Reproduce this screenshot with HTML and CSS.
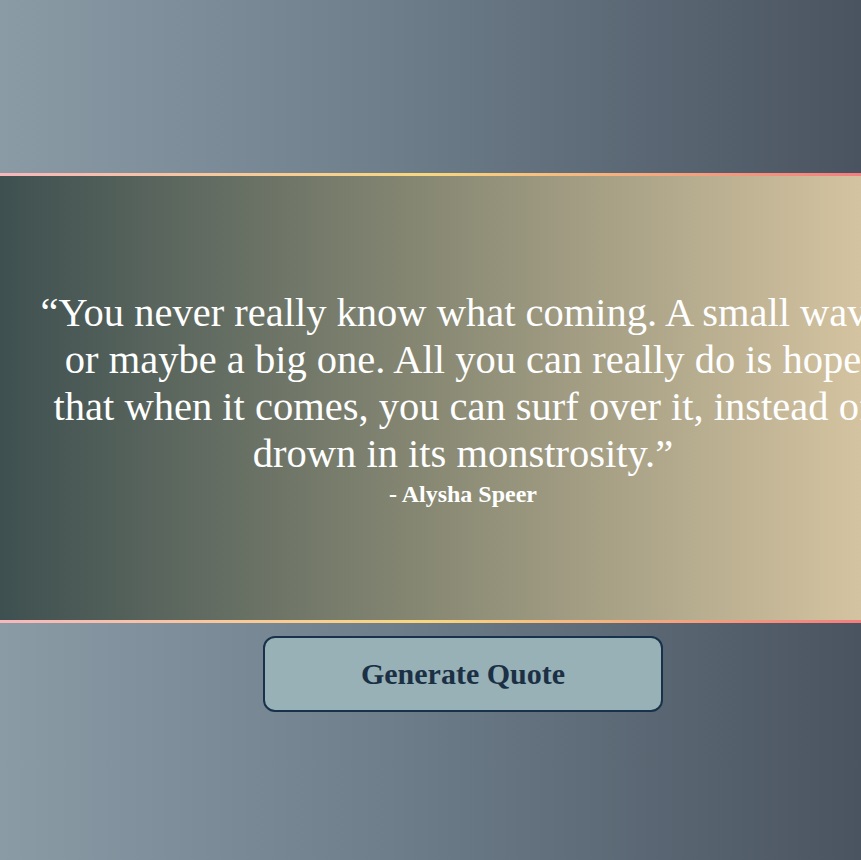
FILE: index.html
```html
<!DOCTYPE html>
<html lang="en">
<head>
<meta charset="utf-8">
<title>Quote Generator</title>
<link rel="stylesheet" href="styles.css">
</head>
<body>
<main class="page">
  <section class="quote-band">
    <div class="quote-box">
      <p class="quote-text">“You never really know what coming. A small wave or maybe a big one. All you can really do is hope that when it comes, you can surf over it, instead of drown in its monstrosity.”</p>
      <p class="quote-author">- Alysha Speer</p>
    </div>
  </section>
  <div class="actions">
    <button class="generate-btn" type="button">Generate Quote</button>
  </div>
</main>
</body>
</html>
```
FILE: styles.css
```css
html {
  overflow: hidden;
  background: linear-gradient(to right, #8b9ba6 0%, #6e7e8b 45%, #4a5460 100%);
  min-height: 100%;
}
body {
  margin: 0;
  min-height: 860px;
  font-family: "Liberation Serif", "Times New Roman", serif;
}
.page {
  width: 926px;
  padding-top: 173px;
}
.quote-band {
  height: 444px;
  border-top: 3px solid #f8b6bb;
  border-bottom: 3px solid #f8b6bb;
  border-image: linear-gradient(to right, #f8b7bc 0%, #f9d77d 46%, #f47d7d 93%, #f47d7d 100%) 1;
  background: linear-gradient(to right, #3e5050 0%, #878873 46%, #d4c3a0 93%, #d4c3a0 100%);
  display: flex;
  align-items: center;
  justify-content: center;
}
.quote-box {
  width: 851px;
  text-align: center;
  color: #ffffff;
}
.quote-text {
  margin: 0;
  font-size: 40.5px;
  line-height: 47px;
}
.quote-author {
  margin: 4px 0 0;
  font-size: 24px;
  font-weight: bold;
}
.actions {
  display: flex;
  justify-content: center;
  padding-top: 13px;
}
.generate-btn {
  width: 400px;
  height: 76px;
  background: #97b1b6;
  border: 2px solid #17324a;
  border-radius: 12px;
  font-family: "Liberation Serif", "Times New Roman", serif;
  font-size: 30px;
  font-weight: bold;
  color: #1b3045;
  cursor: pointer;
}
```
